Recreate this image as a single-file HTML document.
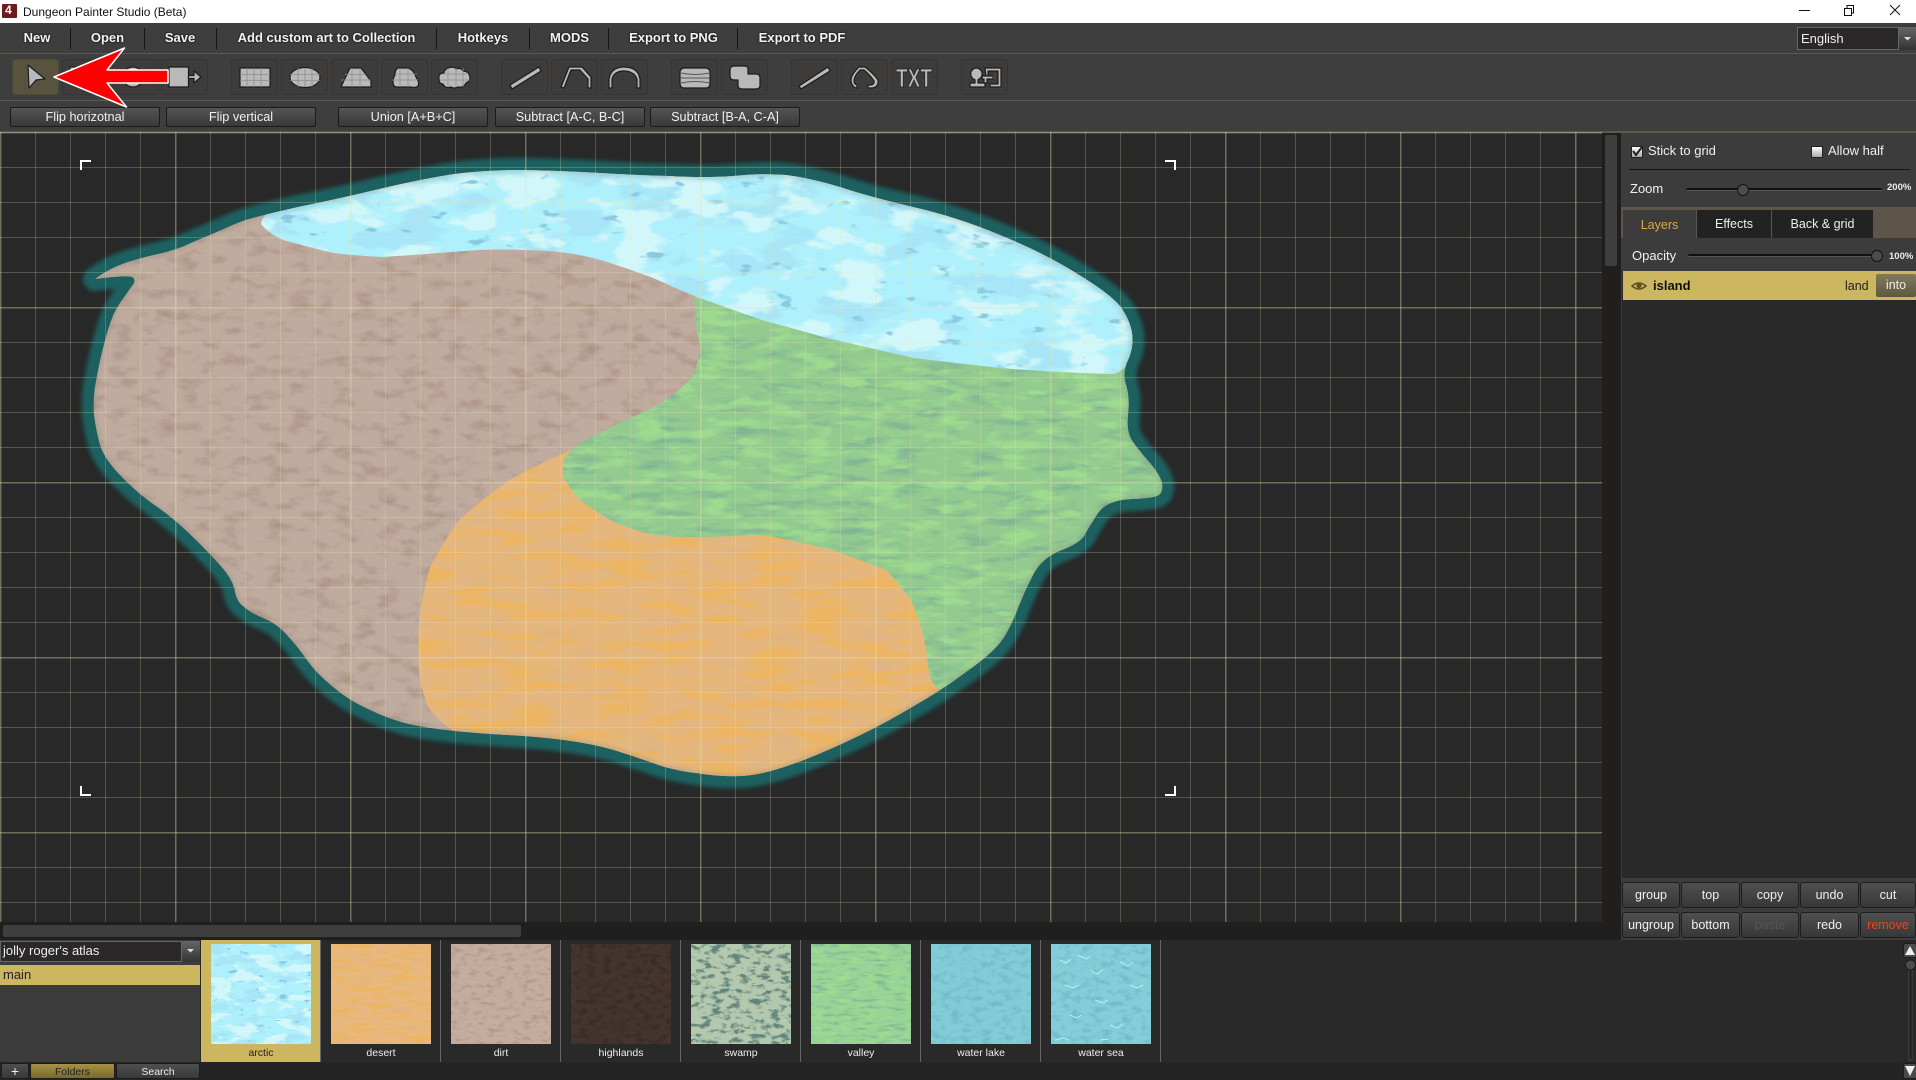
<!DOCTYPE html>
<html><head><meta charset="utf-8"><title>Dungeon Painter Studio (Beta)</title>
<style>
html,body{margin:0;padding:0;width:1916px;height:1080px;overflow:hidden;background:#2a2929;font-family:"Liberation Sans",sans-serif;color:#eee}
div,span{position:absolute;box-sizing:border-box;white-space:nowrap}
svg{position:absolute;left:0;top:0;display:block}
.m{top:23px;height:30px;line-height:30px;font-size:13px;font-weight:bold;color:#f2f2f2;text-shadow:0 0 2px #000;transform:translateX(-50%)}
.sep{top:28px;width:1px;height:21px;background:#151515}
.hl{left:0;width:1916px;height:1px;background:#5f594d}
.tb{top:59px;width:47px;height:36px;background:#3d3c3b;border:1px solid #363535;border-radius:3px}
.fb{top:107px;height:20px;background:linear-gradient(#545454,#393939);border:1px solid #1b1b1b;border-radius:2px;font-size:12.7px;line-height:18px;text-align:center;color:#f0f0f0}
.pb{height:26px;background:linear-gradient(#4f4f4f,#383838);border:1px solid #1d1d1d;border-radius:3px;font-size:12.5px;line-height:25px;text-align:center;color:#f0f0f0}
.t{font-size:13px;color:#f0f0f0}
.lab{top:1047px;width:120px;text-align:center;font-size:10.5px;color:#eee;line-height:13px}
.vs{top:940px;width:1px;height:122px;background:#666}
.tk{height:3px;background:#111;border-radius:2px;border-bottom:1px solid #555}
.kn{width:12px;height:12px;border-radius:50%;background:#4c4c4c;border:1px solid #111}
.cb{width:12px;height:12px;background:linear-gradient(#fff,#aaa);border:1px solid #222}
</style></head><body>

<!-- title bar -->
<div style="left:0;top:0;width:1916px;height:23px;background:#fff"></div>
<div style="left:2px;top:4px;width:15px;height:14px;background:#6b1c1c;border-radius:1px"></div>
<div style="left:5px;top:3px;font:bold 12px 'Liberation Sans',sans-serif;color:#fff;line-height:15px">4</div>
<div style="left:23px;top:5px;font-size:12px;line-height:14px;color:#111">Dungeon Painter Studio (Beta)</div>
<svg width="1916" height="23" style="z-index:3"><path d="M1799 10.5h11" stroke="#111" fill="none"/><path d="M1844.5 8.5h7v7h-7zM1847 8V5.5h6.5V13h-2" stroke="#111" fill="none"/><path d="M1890 5l10 10M1900 5l-10 10" stroke="#111" fill="none"/></svg>

<!-- top chrome -->
<div style="left:0;top:23px;width:1916px;height:108px;background:#3e3e3e"></div>
<div class="hl" style="top:53px"></div>
<div class="hl" style="top:100px"></div>
<div class="hl" style="top:131px;height:2px"></div>

<div class="m" style="left:37px">New</div>
<div class="m" style="left:107.500px">Open</div>
<div class="m" style="left:180px">Save</div>
<div class="m" style="left:326.5px">Add custom art to Collection</div>
<div class="m" style="left:483px">Hotkeys</div>
<div class="m" style="left:569.500px">MODS</div>
<div class="m" style="left:673.500px">Export to PNG</div>
<div class="m" style="left:802px">Export to PDF</div>
<div class="sep" style="left:70px"></div><div class="sep" style="left:144px"></div><div class="sep" style="left:216px"></div><div class="sep" style="left:436px"></div><div class="sep" style="left:529px"></div><div class="sep" style="left:608px"></div><div class="sep" style="left:737px"></div>

<div style="left:1797px;top:27px;width:102px;height:23px;background:#2a2828;border:1px solid #666;font-size:13px;line-height:21px;padding-left:3px;color:#eee">English</div>
<div style="left:1899px;top:27px;width:17px;height:23px;background:linear-gradient(#666,#333)"></div>
<svg width="1916" height="60" style="z-index:3"><path d="M1904 37h7l-3.5 3.5z" fill="#ddd"/></svg>

<!-- toolbar buttons -->
<div class="tb" style="left:12px;background:#57533f;border-color:#4b4836"></div>
<div class="tb" style="left:62px"></div><div class="tb" style="left:112px"></div><div class="tb" style="left:161px"></div>
<div class="tb" style="left:231px"></div><div class="tb" style="left:281px"></div><div class="tb" style="left:331px"></div><div class="tb" style="left:381px"></div><div class="tb" style="left:431px"></div>
<div class="tb" style="left:501px"></div><div class="tb" style="left:551px"></div><div class="tb" style="left:601px"></div>
<div class="tb" style="left:671px"></div><div class="tb" style="left:721px"></div>
<div class="tb" style="left:791px"></div><div class="tb" style="left:841px"></div><div class="tb" style="left:891px"></div>
<div class="tb" style="left:961px"></div>

<div class="fb" style="left:10px;width:150px">Flip horizotnal</div>
<div class="fb" style="left:166px;width:150px">Flip vertical</div>
<div class="fb" style="left:338px;width:150px">Union [A+B+C]</div>
<div class="fb" style="left:495px;width:150px">Subtract [A-C, B-C]</div>
<div class="fb" style="left:650px;width:150px">Subtract [B-A, C-A]</div>

<!-- canvas -->
<div style="left:0;top:133px;width:1602px;height:789px;background:#282828"></div>
<svg width="1916" height="1080" style="z-index:1">
<defs>
<clipPath id="land"><path id="o" d="M95 279Q110 268 125 263Q140 258 158 254Q177 250 193 242Q210 235 226 228Q243 220 253 218Q263 215 298 207Q333 200 375 190Q417 180 448 175Q480 170 523 170Q567 171 600 173Q632 175 668 176Q705 178 733 176Q762 173 786 175Q810 178 840 187Q870 197 913 207Q957 217 1000 235Q1044 253 1076 273Q1109 293 1120 306Q1130 320 1132 333Q1134 347 1128 360Q1122 372 1126 385Q1130 397 1128 415Q1126 433 1133 442Q1140 452 1150 463Q1160 475 1162 483Q1163 490 1160 494Q1157 498 1132 499Q1107 500 1098 513Q1089 527 1085 534Q1082 542 1062 550Q1043 557 1034 573Q1025 590 1018 608Q1011 627 1002 640Q993 653 966 672Q939 692 912 707Q886 723 850 740Q814 757 787 766Q761 775 741 776Q721 777 696 773Q671 770 653 763Q636 757 617 751Q598 745 571 741Q544 737 508 735Q473 733 446 730Q419 727 401 722Q384 717 366 708Q348 700 332 686Q316 673 307 660Q298 647 287 635Q276 623 263 618Q251 613 244 607Q237 602 235 592Q234 583 225 571Q216 560 196 540Q176 520 156 506Q137 493 121 476Q105 460 100 445Q96 430 94 415Q93 400 95 387Q97 375 100 361Q103 347 108 330Q113 313 120 303Q127 293 132 286Q137 280 132 277Q127 275 95 279Z"/></clipPath>
<filter id="gl" x="-5%" y="-5%" width="110%" height="110%"><feGaussianBlur stdDeviation="2.2"/></filter>
<filter id="dirt" x="0" y="0" width="1" height="1" color-interpolation-filters="sRGB">
<feTurbulence type="fractalNoise" baseFrequency=".045 .09" numOctaves="5" seed="3"/>
<feColorMatrix values="0 0 0 0 .68 0 0 0 0 .58 0 0 0 0 .53 2.6 0 0 0 -1.25"/>
<feComposite in2="SourceGraphic" operator="atop"/></filter>
<filter id="desert" x="0" y="0" width="1" height="1" color-interpolation-filters="sRGB">
<feTurbulence type="fractalNoise" baseFrequency=".02 .1" numOctaves="5" seed="8" result="a"/>
<feColorMatrix in="a" values="0 0 0 0 .93 0 0 0 0 .71 0 0 0 0 .38 5 0 0 0 -2.4" result="b"/>
<feTurbulence type="fractalNoise" baseFrequency=".03 .07" numOctaves="5" seed="21"/>
<feColorMatrix values="0 0 0 0 .86 0 0 0 0 .70 0 0 0 0 .54 2.6 0 0 0 -1.4" result="c"/>
<feMerge result="d"><feMergeNode in="c"/><feMergeNode in="b"/></feMerge>
<feComposite in="d" in2="SourceGraphic" operator="atop"/></filter>
<filter id="green" x="0" y="0" width="1" height="1" color-interpolation-filters="sRGB">
<feTurbulence type="fractalNoise" baseFrequency=".025 .11" numOctaves="5" seed="5"/>
<feColorMatrix values="0 0 0 0 .50 0 0 0 0 .71 0 0 0 0 .58 3.2 0 0 0 -1.6" result="b"/>
<feTurbulence type="fractalNoise" baseFrequency=".03 .1" numOctaves="4" seed="17"/>
<feColorMatrix values="0 0 0 0 .62 0 0 0 0 .86 0 0 0 0 .56 4 0 0 0 -1.9" result="c"/>
<feMerge result="d"><feMergeNode in="b"/><feMergeNode in="c"/></feMerge>
<feComposite in="d" in2="SourceGraphic" operator="atop"/></filter>
<filter id="ice" x="0" y="0" width="1" height="1" color-interpolation-filters="sRGB">
<feTurbulence type="fractalNoise" baseFrequency=".016 .04" numOctaves="4" seed="11"/>
<feColorMatrix values="0 0 0 0 .66 0 0 0 0 .90 0 0 0 0 .97 9 0 0 0 -4.7" result="b"/>
<feTurbulence type="fractalNoise" baseFrequency=".018 .04" numOctaves="4" seed="29"/>
<feColorMatrix values="0 0 0 0 .82 0 0 0 0 .97 0 0 0 0 .98 9 0 0 0 -4.7" result="c"/>
<feTurbulence type="fractalNoise" baseFrequency=".03 .08" numOctaves="3" seed="41"/>
<feColorMatrix values="0 0 0 0 .54 0 0 0 0 .79 0 0 0 0 .88 12 0 0 0 -8.6" result="e"/>
<feMerge result="d"><feMergeNode in="b"/><feMergeNode in="c"/><feMergeNode in="e"/></feMerge>
<feComposite in="d" in2="SourceGraphic" operator="atop"/></filter>
<filter id="high" x="0" y="0" width="1" height="1" color-interpolation-filters="sRGB">
<feTurbulence type="fractalNoise" baseFrequency=".05 .08" numOctaves="5" seed="6"/>
<feColorMatrix values="0 0 0 0 .22 0 0 0 0 .17 0 0 0 0 .15 3 0 0 0 -1.3"/>
<feComposite in2="SourceGraphic" operator="atop"/></filter>
<filter id="swamp" x="0" y="0" width="1" height="1" color-interpolation-filters="sRGB">
<feTurbulence type="fractalNoise" baseFrequency=".04 .08" numOctaves="5" seed="12"/>
<feColorMatrix values="0 0 0 0 .38 0 0 0 0 .52 0 0 0 0 .48 5 0 0 0 -2.5"/>
<feComposite in2="SourceGraphic" operator="atop"/></filter>
<filter id="lake" x="0" y="0" width="1" height="1" color-interpolation-filters="sRGB">
<feTurbulence type="fractalNoise" baseFrequency=".04 .07" numOctaves="5" seed="14"/>
<feColorMatrix values="0 0 0 0 .44 0 0 0 0 .73 0 0 0 0 .79 3 0 0 0 -1.4"/>
<feComposite in2="SourceGraphic" operator="atop"/></filter>
</defs>

<path d="M95 279Q110 268 125 263Q140 258 158 254Q177 250 193 242Q210 235 226 228Q243 220 253 218Q263 215 298 207Q333 200 375 190Q417 180 448 175Q480 170 523 170Q567 171 600 173Q632 175 668 176Q705 178 733 176Q762 173 786 175Q810 178 840 187Q870 197 913 207Q957 217 1000 235Q1044 253 1076 273Q1109 293 1120 306Q1130 320 1132 333Q1134 347 1128 360Q1122 372 1126 385Q1130 397 1128 415Q1126 433 1133 442Q1140 452 1150 463Q1160 475 1162 483Q1163 490 1160 494Q1157 498 1132 499Q1107 500 1098 513Q1089 527 1085 534Q1082 542 1062 550Q1043 557 1034 573Q1025 590 1018 608Q1011 627 1002 640Q993 653 966 672Q939 692 912 707Q886 723 850 740Q814 757 787 766Q761 775 741 776Q721 777 696 773Q671 770 653 763Q636 757 617 751Q598 745 571 741Q544 737 508 735Q473 733 446 730Q419 727 401 722Q384 717 366 708Q348 700 332 686Q316 673 307 660Q298 647 287 635Q276 623 263 618Q251 613 244 607Q237 602 235 592Q234 583 225 571Q216 560 196 540Q176 520 156 506Q137 493 121 476Q105 460 100 445Q96 430 94 415Q93 400 95 387Q97 375 100 361Q103 347 108 330Q113 313 120 303Q127 293 132 286Q137 280 132 277Q127 275 95 279Z" fill="#1a6160" stroke="#1a6160" stroke-width="24" stroke-linejoin="round" filter="url(#gl)"/>

<g clip-path="url(#land)">
<rect x="80" y="160" width="1100" height="630" fill="#c0ac9f" filter="url(#dirt)"/>
<path fill="#e5b77e" filter="url(#desert)" d="M578 447Q543 462 509 480Q482 500 459 520Q443 543 430 567Q423 593 419 620Q418 647 419 673Q422 691 428 707Q438 720 451 730L451 800L960 800L960 690L940 500L590 440Z"/>
<path fill="#93ca8f" filter="url(#green)" d="M695 297Q694 310 696 323Q698 337 700 350Q698 365 692 377Q678 392 662 403Q640 414 619 423Q598 434 580 443Q570 450 565 458Q561 468 564 478Q568 487 580 500Q596 512 616 523Q634 530 653 535Q671 537 689 537Q725 537 761 535Q797 541 832 550Q860 560 886 570Q900 585 911 600Q918 617 923 633Q927 653 929 673Q932 684 938 689L1200 700L1200 280L697 297Z"/>
<path fill="#aef0fb" filter="url(#ice)" d="M261 224Q262 216 270 212L300 160L1180 160L1180 300L1140 340Q1134 360 1122 370Q1115 375 1109 374Q1050 372 1000 368Q957 363 914 358Q870 348 827 338Q795 329 762 320Q730 309 697 297Q675 288 653 278Q632 270 610 263Q589 256 567 253Q545 250 523 250Q500 249 480 250Q465 251 450 252Q416 255 383 257Q358 256 333 253Q308 247 283 240Q268 233 261 224Z"/>
<path d="M95 279Q110 268 125 263Q140 258 158 254Q177 250 193 242Q210 235 226 228Q243 220 253 218Q263 215 298 207Q333 200 375 190Q417 180 448 175Q480 170 523 170Q567 171 600 173Q632 175 668 176Q705 178 733 176Q762 173 786 175Q810 178 840 187Q870 197 913 207Q957 217 1000 235Q1044 253 1076 273Q1109 293 1120 306Q1130 320 1132 333Q1134 347 1128 360Q1122 372 1126 385Q1130 397 1128 415Q1126 433 1133 442Q1140 452 1150 463Q1160 475 1162 483Q1163 490 1160 494Q1157 498 1132 499Q1107 500 1098 513Q1089 527 1085 534Q1082 542 1062 550Q1043 557 1034 573Q1025 590 1018 608Q1011 627 1002 640Q993 653 966 672Q939 692 912 707Q886 723 850 740Q814 757 787 766Q761 775 741 776Q721 777 696 773Q671 770 653 763Q636 757 617 751Q598 745 571 741Q544 737 508 735Q473 733 446 730Q419 727 401 722Q384 717 366 708Q348 700 332 686Q316 673 307 660Q298 647 287 635Q276 623 263 618Q251 613 244 607Q237 602 235 592Q234 583 225 571Q216 560 196 540Q176 520 156 506Q137 493 121 476Q105 460 100 445Q96 430 94 415Q93 400 95 387Q97 375 100 361Q103 347 108 330Q113 313 120 303Q127 293 132 286Q137 280 132 277Q127 275 95 279Z" fill="none" stroke="#888078" stroke-opacity=".3" stroke-width="5" filter="url(#gl)"/>
</g>
</svg>

<!-- grid overlay -->
<div style="left:0;top:132px;width:1602px;height:790px;z-index:2;
background-image:linear-gradient(to right,rgba(232,228,170,.18) 2px,transparent 2px),linear-gradient(to bottom,rgba(232,228,170,.18) 2px,transparent 2px),linear-gradient(to right,rgba(232,228,180,.24) 1px,transparent 1px),linear-gradient(to bottom,rgba(232,228,180,.24) 1px,transparent 1px);
background-size:175px 175px,175px 175px,35px 35px,35px 35px;background-position:0 0"></div>

<!-- corner marks -->
<svg width="1916" height="1080" style="z-index:3;pointer-events:none"><g fill="none" stroke="#fff" stroke-width="2"><path d="M91 161H81V170"/><path d="M1165 161H1175V170"/><path d="M81 786V795H91"/><path d="M1175 786V795H1165"/></g></svg>

<!-- toolbar icons -->
<svg width="1916" height="135" style="z-index:4">
<g fill="#b9b9b9" stroke="#1c1c1c" stroke-width="1.2" stroke-linejoin="round">
<path d="M28 65L45 79L36 80L29 88Z"/>
<path d="M70 67h16v6H70z"/>
<circle cx="133" cy="77" r="10"/>
<path d="M169 67h19.5v20H169z"/><path d="M188.500 75.500H194V71L201 77L194 83V78.500H188.500Z"/>
<rect x="240" y="68" width="30" height="19"/>
<ellipse cx="305" cy="77.5" rx="15" ry="10"/>
<path d="M350 68h11l10 13v6h-30z"/>
<path d="M398 68h10q6 2 8 9q4 6 2 9q-2 2-8 1h-13q-4 0-4-5q0-4 2-7q0-6 3-7z"/>
<path d="M448 68q6-2 8 1q5-2 7 2q6 0 7 6q0 5-4 6q-2 5-8 4q-3 2-7 0q-6 2-8-3q-4 0-4-5q-1-6 5-6q0-3 4-5z"/>
<path d="M510 85L539 67L541 71L512 89Z"/>
<path d="M561 87L569 67H582L591 77V88H588V79L580 70H571L564 88Z"/>
<path d="M609 88V79Q611 67 624 67Q638 67 640 79V88H637V79Q634 71 624 71Q614 71 612 79V88Z"/>
<path d="M684 68h22q4 1 4 4v11q0 5-4 5h-22q-4 0-4-5V72q0-3 4-4z"/>
<path d="M730 70q0-4 4-4h10q4 0 4 3v5h8q4 0 4 4v7q0 4-4 4h-14q-4 0-4-4v-5h-4q-4 0-4-4z"/>
<path d="M799 86L828 67L830 71L801 89Z"/>
<path d="M856 88q-5-2-5-8q0-5 8-13h6q9 7 13 13q1 7-6 8h-4v-3h3q4-1 3-4q-3-5-10-11h-4q-6 6-6 11q0 3 3 4v3z"/>
<path d="M976 68a6 6 0 0 1 2 11.700V83h7v4h-15v-4h5v-3.300A6 6 0 0 1 976 68zM985 68h16v19h-11v-3h8V71h-10v5h-2zM982 76h11v3h-6v4h-3v-4h-2z"/>
</g>
<path d="M993 75h3v4h-3z" fill="#444"/>
<g stroke="#8d8d8d" stroke-width=".8" fill="none"><path d="M240 74.5h30M240 80.5h30M247 68v19M254 68v19M261 68v19M290 74.5h30M290 80.5h30M298 68v19M305 68v19M312 68v19M341 80h30M345 74.5h21M352 68v19M360 68v19M395 74h22M392 80h26M400 68v19M408 68v19M443 74h24M440 80h30M448 68v19M456 68v19M463 68v19"/></g>
<path d="M681 73q14 3 29 0M680 78h30M681 83q14-3 29 0" stroke="#555" fill="none"/>
<text x="896" y="87" font-family="Liberation Sans,sans-serif" font-size="26" font-weight="bold" textLength="36" lengthAdjust="spacingAndGlyphs" fill="#b9b9b9" stroke="#1c1c1c" stroke-width=".8">TXT</text>
<!-- red arrow -->
<path d="M54 77L124.5 48L107 70H168V83H107L126.5 107Z" fill="#fe0000" stroke="#fff" stroke-width="1.5" stroke-linejoin="round"/>
</svg>

<!-- right scrollbar -->
<div style="left:1602px;top:133px;width:19px;height:789px;background:#201f1d"></div>
<div style="left:1605px;top:135px;width:12px;height:131px;background:#3e3e3e;border-radius:2px"></div>

<!-- right panel -->
<div style="left:1621px;top:133px;width:295px;height:807px;background:#2a2929;border-left:1px solid #3c3c3c"></div>
<div style="left:1621px;top:133px;width:295px;height:138px;background:#3c3c3c"></div>
<div class="cb" style="left:1631px;top:146px"></div>
<svg width="1916" height="170" style="z-index:4"><path d="M1633 151l3 4 6-8" fill="none" stroke="#222" stroke-width="2"/></svg>
<div class="t" style="left:1648px;top:143px;line-height:15px">Stick to grid</div>
<div class="cb" style="left:1811px;top:146px"></div>
<div class="t" style="left:1828px;top:143px;line-height:15px">Allow half</div>
<div style="left:1629px;top:169px;width:281px;height:1px;background:#151515"></div>
<div class="t" style="left:1630px;top:181px;line-height:15px">Zoom</div>
<div class="tk" style="left:1686px;top:188px;width:196px"></div>
<div class="kn" style="left:1737px;top:184px"></div>
<div style="left:1887px;top:182px;font-size:9.5px;font-weight:bold;line-height:12px;color:#eee">200%</div>

<div style="left:1621px;top:207px;width:295px;height:31px;background:#5d5549"></div>
<div style="left:1623px;top:210px;width:73px;height:28px;background:#3c3c3c;color:#e0a93a;font-size:12.5px;line-height:31px;text-align:center">Layers</div>
<div style="left:1697px;top:210px;width:74px;height:28px;background:#232222;font-size:12.5px;line-height:29px;text-align:center">Effects</div>
<div style="left:1772px;top:210px;width:101px;height:28px;background:#232222;font-size:12.5px;line-height:29px;text-align:center">Back &amp; grid</div>
<div style="left:1621px;top:238px;width:295px;height:33px;background:#3c3c3c"></div>
<div class="t" style="left:1632px;top:248px;line-height:15px">Opacity</div>
<div class="tk" style="left:1688px;top:254px;width:192px"></div>
<div class="kn" style="left:1871px;top:250px"></div>
<div style="left:1889px;top:251px;font-size:9.5px;font-weight:bold;line-height:12px;color:#eee">100%</div>

<div style="left:1623px;top:271px;width:293px;height:29px;background:#ccb660"></div>
<svg width="1916" height="300" style="z-index:4"><path d="M1632 286q7-6 14 0q-7 6-14 0z" fill="none" stroke="#5b4f25" stroke-width="1.5"/><circle cx="1639" cy="285.5" r="2.6" fill="#5b4f25"/></svg>
<div style="left:1653px;top:278px;font-size:13px;font-weight:bold;color:#111;line-height:15px">island</div>
<div style="left:1845px;top:279px;font-size:12.5px;color:#222;line-height:15px">land</div>
<div style="left:1876px;top:274px;width:40px;height:23px;background:linear-gradient(#827a5c,#5e5840);border-radius:2px;font-size:12.5px;line-height:23px;text-align:center;color:#eee">into</div>

<div style="left:1621px;top:878px;width:295px;height:62px;background:#3c3c3c"></div>
<div class="pb" style="left:1622px;top:882px;width:58px">group</div>
<div class="pb" style="left:1681px;top:882px;width:59px">top</div>
<div class="pb" style="left:1741px;top:882px;width:58px">copy</div>
<div class="pb" style="left:1800px;top:882px;width:59px">undo</div>
<div class="pb" style="left:1860px;top:882px;width:56px">cut</div>
<div class="pb" style="left:1622px;top:912px;width:58px">ungroup</div>
<div class="pb" style="left:1681px;top:912px;width:59px">bottom</div>
<div class="pb" style="left:1741px;top:912px;width:58px;color:#555">paste</div>
<div class="pb" style="left:1800px;top:912px;width:59px">redo</div>
<div class="pb" style="left:1860px;top:912px;width:56px;color:#e24a1c">remove</div>

<!-- horizontal scroll strip -->
<div style="left:0;top:922px;width:1621px;height:18px;background:#201f1d"></div>
<div style="left:3px;top:925px;width:518px;height:12px;background:#3e3e3e;border-radius:2px"></div>

<!-- bottom -->
<div style="left:0;top:940px;width:1916px;height:122px;background:#2a2929"></div>
<div style="left:0;top:1062px;width:1916px;height:18px;background:#252424"></div>
<div style="left:0;top:940px;width:200px;height:122px;background:#3c3c3c"></div>
<div style="left:0;top:941px;width:182px;height:21px;background:#2a2828;border:1px solid #666;font-size:13px;line-height:18px;padding-left:2px;color:#eee">jolly roger's atlas</div>
<div style="left:182px;top:941px;width:18px;height:21px;background:linear-gradient(#666,#333);border-radius:2px"></div>
<div style="left:0;top:965px;width:200px;height:20px;background:#ccb660;color:#222;font-size:13px;line-height:20px;padding-left:3px">main</div>
<div style="left:1px;top:1063px;width:28px;height:16px;background:linear-gradient(#4f4f4f,#383838);border:1px solid #1d1d1d;border-radius:2px;font-size:14px;line-height:15px;text-align:center">+</div>
<div style="left:30px;top:1063px;width:85px;height:16px;background:linear-gradient(#a49245,#7a6a2a);border:1px solid #1d1d1d;border-radius:2px;font-size:10.5px;line-height:16px;text-align:center;color:#222">Folders</div>
<div style="left:116px;top:1063px;width:84px;height:16px;background:linear-gradient(#4f4f4f,#383838);border:1px solid #1d1d1d;border-radius:2px;font-size:10.5px;line-height:16px;text-align:center">Search</div>

<div style="left:201px;top:940px;width:119px;height:122px;background:#ccb660"></div>
<div class="vs" style="left:320px"></div><div class="vs" style="left:440px"></div><div class="vs" style="left:560px"></div><div class="vs" style="left:680px"></div><div class="vs" style="left:800px"></div><div class="vs" style="left:920px"></div><div class="vs" style="left:1040px"></div><div class="vs" style="left:1160px"></div>

<svg width="1916" height="1080" style="z-index:3">
<g transform="translate(211 944) scale(.4)"><rect width="250" height="250" fill="#aef0fb" filter="url(#ice)"/></g>
<g transform="translate(331 944) scale(.4)"><rect width="250" height="250" fill="#e8b87e" filter="url(#desert)"/></g>
<g transform="translate(451 944) scale(.4)"><rect width="250" height="250" fill="#c4ad9f" filter="url(#dirt)"/></g>
<g transform="translate(571 944) scale(.4)"><rect width="250" height="250" fill="#45352e" filter="url(#high)"/></g>
<g transform="translate(691 944) scale(.4)"><rect width="250" height="250" fill="#b4c8ae" filter="url(#swamp)"/></g>
<g transform="translate(811 944) scale(.4)"><rect width="250" height="250" fill="#97d497" filter="url(#green)"/></g>
<g transform="translate(931 944) scale(.4)"><rect width="250" height="250" fill="#82ccd8" filter="url(#lake)"/></g>
<g transform="translate(1051 944) scale(.4)"><rect width="250" height="250" fill="#84ced9" filter="url(#lake)"/></g>
<path d="M1060 960l6 3 5-4M1078 955l8 4 5-3M1090 970l7 4 6-5M1120 962l8 4 5-4M1065 985l8 3 6-3M1095 1000l8 3 5-3M1130 985l7 3 6-3M1070 1015l7 3 5-3M1110 1025l7 3 6-4M1055 1040l8-2 6 2M1100 1040l9-1" fill="none" stroke="#aef4f4" stroke-width="1"/>
<!-- vertical scroll -->
<rect x="1903.500" y="943.500" width="13" height="14" rx="2" fill="#4a4a4a" stroke="#1d1d1d"/>
<path d="M1905 955l5-9 5 9z" fill="#eee"/>
<rect x="1909" y="970" width="3" height="90" fill="#1c1c1c" stroke="#555" stroke-width=".7"/>
<circle cx="1910.500" cy="965" r="5" fill="#4c4c4c" stroke="#1c1c1c"/>
<rect x="1903.500" y="1063.500" width="13" height="15" rx="2" fill="#4a4a4a" stroke="#1d1d1d"/>
<path d="M1905 1066l5 10 5-10z" fill="#eee"/>
<path d="M187 949h7l-3.500 3.500z" fill="#ddd"/>
</svg>

<div class="lab" style="left:201px;color:#222;z-index:4">arctic</div>
<div class="lab" style="left:321px;z-index:4">desert</div>
<div class="lab" style="left:441px;z-index:4">dirt</div>
<div class="lab" style="left:561px;z-index:4">highlands</div>
<div class="lab" style="left:681px;z-index:4">swamp</div>
<div class="lab" style="left:801px;z-index:4">valley</div>
<div class="lab" style="left:921px;z-index:4">water lake</div>
<div class="lab" style="left:1041px;z-index:4">water sea</div>
</body></html>
